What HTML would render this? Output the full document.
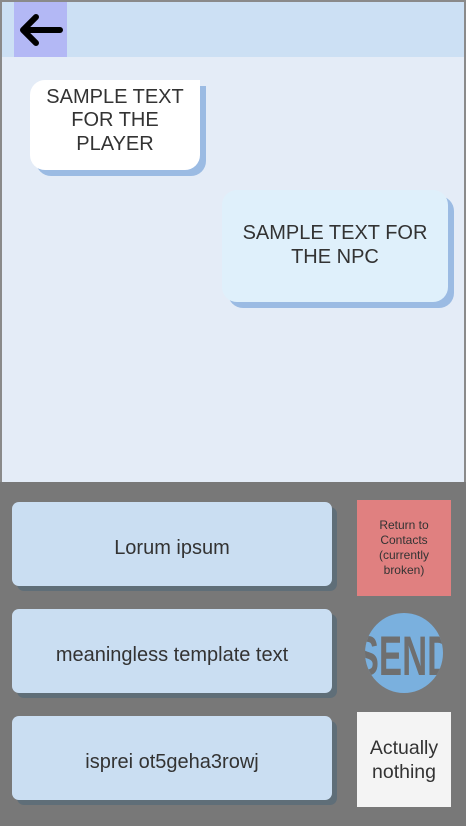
<!DOCTYPE html>
<html><head><style>
*{margin:0;padding:0;box-sizing:border-box}
body{width:466px;height:826px;overflow:hidden;background:#787878;font-family:"Liberation Sans",sans-serif;position:relative}
.abs{position:absolute}
.ctr{display:flex;align-items:center;justify-content:center;text-align:center}
.btn{position:absolute;left:12px;width:320px;height:84px;background:#cadef2;border-radius:7px;box-shadow:5px 5px 0 #5f6e78;font-size:20px;color:#333;padding-top:8px}
</style></head><body>
<div class="abs" style="left:0;top:0;width:466px;height:482px;background:#e4ecf7;border:2px solid #8a8a8a;border-bottom:none"></div>
<div class="abs" style="left:2px;top:2px;width:462px;height:55px;background:#cce0f4"></div>
<div class="abs" style="left:14px;top:2px;width:53px;height:55px;background:#b3b8f5"></div>
<svg class="abs" style="left:18px;top:12px" width="46" height="36" viewBox="0 0 46 36"><path d="M42 18H6M18 5L5 18l13 13" stroke="#000" stroke-width="6" fill="none" stroke-linecap="round" stroke-linejoin="round"/></svg>
<div class="abs" style="left:36px;top:86px;width:170px;height:90px;background:#9bbbe3;border-radius:15px 0 15px 15px"></div>
<div class="abs ctr" style="left:30px;top:80px;width:170px;height:90px;background:#fff;border-radius:15px 0 15px 15px;font-size:20px;color:#333;line-height:23.5px;padding-bottom:8px">SAMPLE TEXT<br>FOR THE<br>PLAYER</div>
<div class="abs" style="left:228px;top:196px;width:226px;height:112px;background:#9bbbe3;border-radius:15px"></div>
<div class="abs ctr" style="left:222px;top:190px;width:226px;height:112px;background:#dff0fb;border-radius:15px;font-size:20px;color:#333;line-height:24px;padding-bottom:2px">SAMPLE TEXT FOR<br>THE NPC</div>
<div class="btn ctr" style="top:502px">Lorum ipsum</div>
<div class="btn ctr" style="top:609px">meaningless template text</div>
<div class="btn ctr" style="top:716px">isprei ot5geha3rowj</div>
<div class="abs ctr" style="left:357px;top:500px;width:94px;height:96px;background:#e08080;font-size:12px;line-height:15px;color:#333">Return to<br>Contacts<br>(currently<br>broken)</div>
<svg class="abs" style="left:364px;top:612px" width="80" height="82" viewBox="0 0 80 82"><defs><clipPath id="c"><ellipse cx="40" cy="41" rx="39" ry="40"/></clipPath></defs><ellipse cx="40" cy="41" rx="39" ry="40" fill="#7ab0de"/><g clip-path="url(#c)"><text x="40" y="63" text-anchor="middle" font-family="Liberation Sans Narrow,Liberation Sans,sans-serif" font-weight="bold" font-size="56" fill="#6f6f6f" transform="translate(40 0) scale(0.62 1) translate(-40 0)">SEND</text></g></svg>
<div class="abs ctr" style="left:357px;top:712px;width:94px;height:95px;background:#f4f4f4;font-size:19.5px;line-height:24px;color:#333">Actually<br>nothing</div>
</body></html>
